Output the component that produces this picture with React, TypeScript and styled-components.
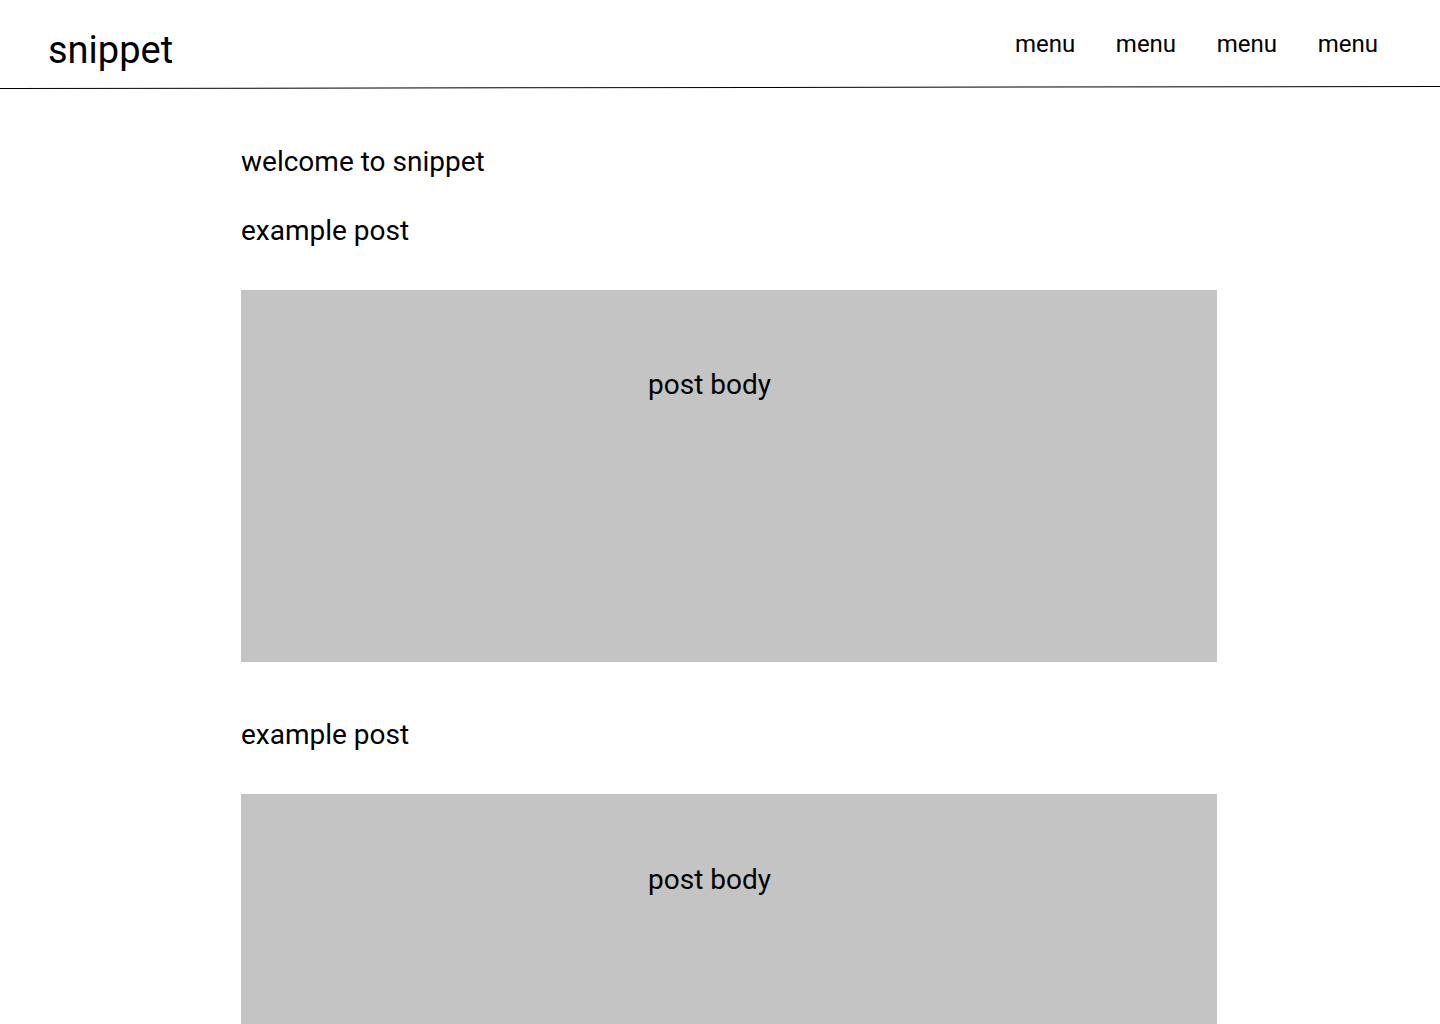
import React from "react";
import styled, { createGlobalStyle } from "styled-components";

const GlobalStyle = createGlobalStyle`
    * {
        box-sizing: border-box;
    }
    body {
        margin: 0;
        background: #ffffff;
        color: #000000;
        font-family: "Roboto", "Liberation Sans", sans-serif;
    }
`;

const Header = styled.header`
    height: 87px;
    padding: 0 62px 0 48px;
    display: flex;
    justify-content: space-between;
    align-items: flex-start;
`;

const Logo = styled.span`
    margin-top: 28px;
    font-size: 38px;
    line-height: 44px;
    font-weight: 400;
`;

const Nav = styled.nav`
    margin-top: 30px;
    display: flex;
    gap: 40.7px;
`;

const NavItem = styled.span`
    font-size: 24px;
    line-height: 28px;
`;

const Divider = styled.div`
    height: 1px;
    background: #000000;
    transform: rotate(-0.08deg);
`;

const Main = styled.main`
    width: 976px;
    margin-left: 241px;
    padding-top: 58px;
    display: flex;
    flex-direction: column;
`;

const Welcome = styled.h1`
    margin: 0 0 37px;
    font-size: 28px;
    line-height: 32px;
    font-weight: 400;
`;

const PostList = styled.div`
    display: flex;
    flex-direction: column;
    gap: 57px;
`;

const Post = styled.article`
    display: flex;
    flex-direction: column;
`;

const PostTitle = styled.h2`
    margin: 0 0 43px;
    font-size: 28px;
    line-height: 32px;
    font-weight: 400;
`;

const PostBody = styled.div<{ $top: number }>`
    height: 372px;
    background: #c4c4c4;
    padding: ${(props) => props.$top}px 39px 0 0;
    text-align: center;
    font-size: 28px;
    line-height: 32px;
`;

const posts = [
    { title: "example post", body: "post body", top: 79 },
    { title: "example post", body: "post body", top: 70 },
];

export default function App() {
    return (
        <>
            <GlobalStyle />
            <Header>
                <Logo>snippet</Logo>
                <Nav>
                    {[0, 1, 2, 3].map((i) => (
                        <NavItem key={i}>menu</NavItem>
                    ))}
                </Nav>
            </Header>
            <Divider />
            <Main>
                <Welcome>welcome to snippet</Welcome>
                <PostList>
                    {posts.map((post, i) => (
                        <Post key={i}>
                            <PostTitle>{post.title}</PostTitle>
                            <PostBody $top={post.top}>{post.body}</PostBody>
                        </Post>
                    ))}
                </PostList>
            </Main>
        </>
    );
}
